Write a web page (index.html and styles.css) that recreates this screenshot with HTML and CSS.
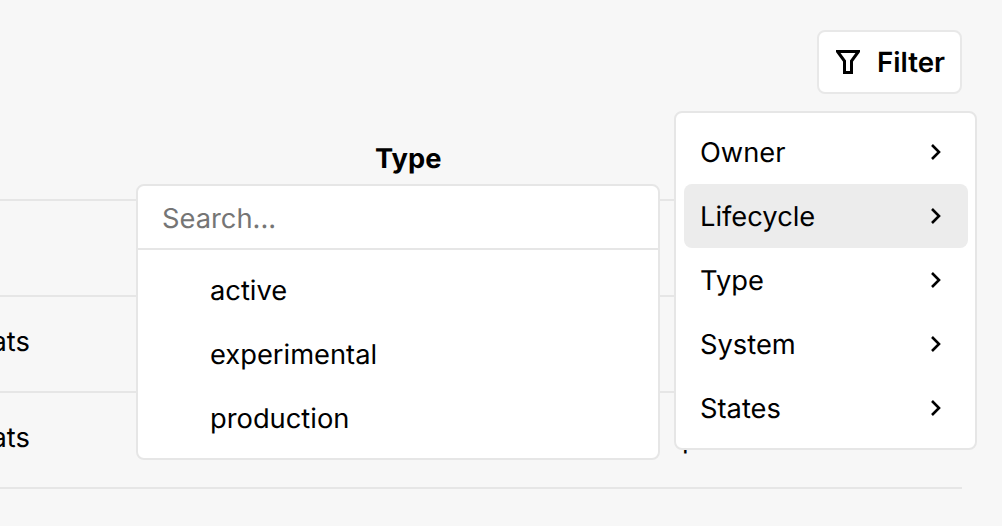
FILE: index.html
```html
<!DOCTYPE html>
<html lang="en">
<head>
    <meta charset="UTF-8">
    <title>Catalog</title>
    <link rel="stylesheet" href="styles.css">
</head>
<body>
    <div class="page">
        <div class="toolbar">
            <button class="filter-btn" type="button">
                <svg class="filter-icon" width="24" height="24" viewBox="0 0 24 24"><path d="M1.5 1.5H22.5L15.5 11V22.5H8.5V11Z"/></svg>
                Filter
            </button>
        </div>

        <div class="table">
            <div class="row head-row">
                <div></div>
                <div class="head-cell">Type</div>
                <div></div>
            </div>
            <div class="row empty-row"></div>
            <div class="row">
                <div class="name-cell">stats</div>
                <div></div>
                <div class="type-cell">production</div>
            </div>
            <div class="row">
                <div class="name-cell">stats</div>
                <div></div>
                <div class="type-cell">production</div>
            </div>
            <div class="row last-row">
                <div class="name-cell">stats</div>
            </div>
        </div>

        <div class="type-popover">
            <input class="search" type="text" placeholder="Search...">
            <ul class="option-list">
                <li>active</li>
                <li>experimental</li>
                <li>production</li>
            </ul>
        </div>

        <ul class="filter-menu">
            <li>Owner <svg class="chevron" width="12" height="18" viewBox="0 0 12 18"><path d="M2 2l7 7-7 7"/></svg></li>
            <li class="selected">Lifecycle <svg class="chevron" width="12" height="18" viewBox="0 0 12 18"><path d="M2 2l7 7-7 7"/></svg></li>
            <li>Type <svg class="chevron" width="12" height="18" viewBox="0 0 12 18"><path d="M2 2l7 7-7 7"/></svg></li>
            <li>System <svg class="chevron" width="12" height="18" viewBox="0 0 12 18"><path d="M2 2l7 7-7 7"/></svg></li>
            <li>States <svg class="chevron" width="12" height="18" viewBox="0 0 12 18"><path d="M2 2l7 7-7 7"/></svg></li>
        </ul>
    </div>
</body>
</html>
```

FILE: styles.css
```css
body {
    margin: 0;
    background-color: #f7f7f7;
    font-family: 'Inter', sans-serif;
    font-size: 27.3px;
    text-rendering: geometricPrecision;
    color: #000;
}
.page {
    position: relative;
    height: 526px;
    overflow: hidden;
}
.toolbar {
    display: flex;
    justify-content: flex-end;
    height: 64px;
    padding: 30px 40px 0 0;
}
.filter-btn {
    display: flex;
    align-items: center;
    gap: 17px;
    width: 145px;
    height: 64px;
    padding: 0 0 0 17px;
    background-color: white;
    border: 2px solid #e8e8e8;
    border-radius: 8px;
    box-sizing: border-box;
    font-family: inherit;
    font-size: 27.7px;
    font-weight: 600;
    text-rendering: geometricPrecision;
    color: #000;
}
.filter-icon {
    fill: none;
    stroke: #000;
    stroke-width: 3;
}
.table {
    width: 962px;
}
.row {
    display: grid;
    grid-template-columns: 375px 307px 1fr;
    height: 94px;
    border-bottom: 2px solid #e6e6e6;
}
.head-row {
    height: 105px;
}
.head-cell {
    padding-top: 48px;
    font-weight: 700;
}
.name-cell {
    margin-left: -32px;
    margin-bottom: 6px;
    align-self: center;
}
.type-cell {
    align-self: center;
    margin-bottom: 3px;
}
.last-row {
    border-bottom: none;
}
.last-row .name-cell {
    margin-left: -36px;
    margin-bottom: 0;
    padding-top: 22px;
}
.type-popover {
    position: absolute;
    left: 136px;
    top: 184px;
    width: 524px;
    height: 276px;
    background-color: white;
    border: 2px solid #e6e6e6;
    border-radius: 8px;
    box-sizing: border-box;
}
.search {
    display: block;
    width: 100%;
    height: 64px;
    padding: 2px 24px 0;
    border: none;
    border-bottom: 2px solid #e6e6e6;
    border-radius: 8px 8px 0 0;
    box-sizing: border-box;
    font-family: inherit;
    font-size: 27.3px;
    text-rendering: geometricPrecision;
    outline: none;
}
.search::placeholder {
    color: #757575;
}
.option-list {
    list-style: none;
    margin: 0;
    padding: 9px 0 7px;
}
.option-list li {
    height: 64px;
    line-height: 64px;
    padding-left: 72px;
}
.filter-menu {
    position: absolute;
    left: 674px;
    top: 111px;
    width: 303px;
    height: 339px;
    list-style: none;
    margin: 0;
    padding: 7px 7px 7px 8px;
    background-color: white;
    border: 2px solid #e6e6e6;
    border-radius: 8px;
    box-sizing: border-box;
}
.filter-menu li {
    display: flex;
    justify-content: space-between;
    align-items: center;
    height: 64px;
    padding: 0 26px 0 16px;
    border-radius: 8px;
}
.filter-menu .selected {
    background-color: #ececec;
}
.chevron {
    fill: none;
    stroke: #000;
    stroke-width: 2.6;
}
```
